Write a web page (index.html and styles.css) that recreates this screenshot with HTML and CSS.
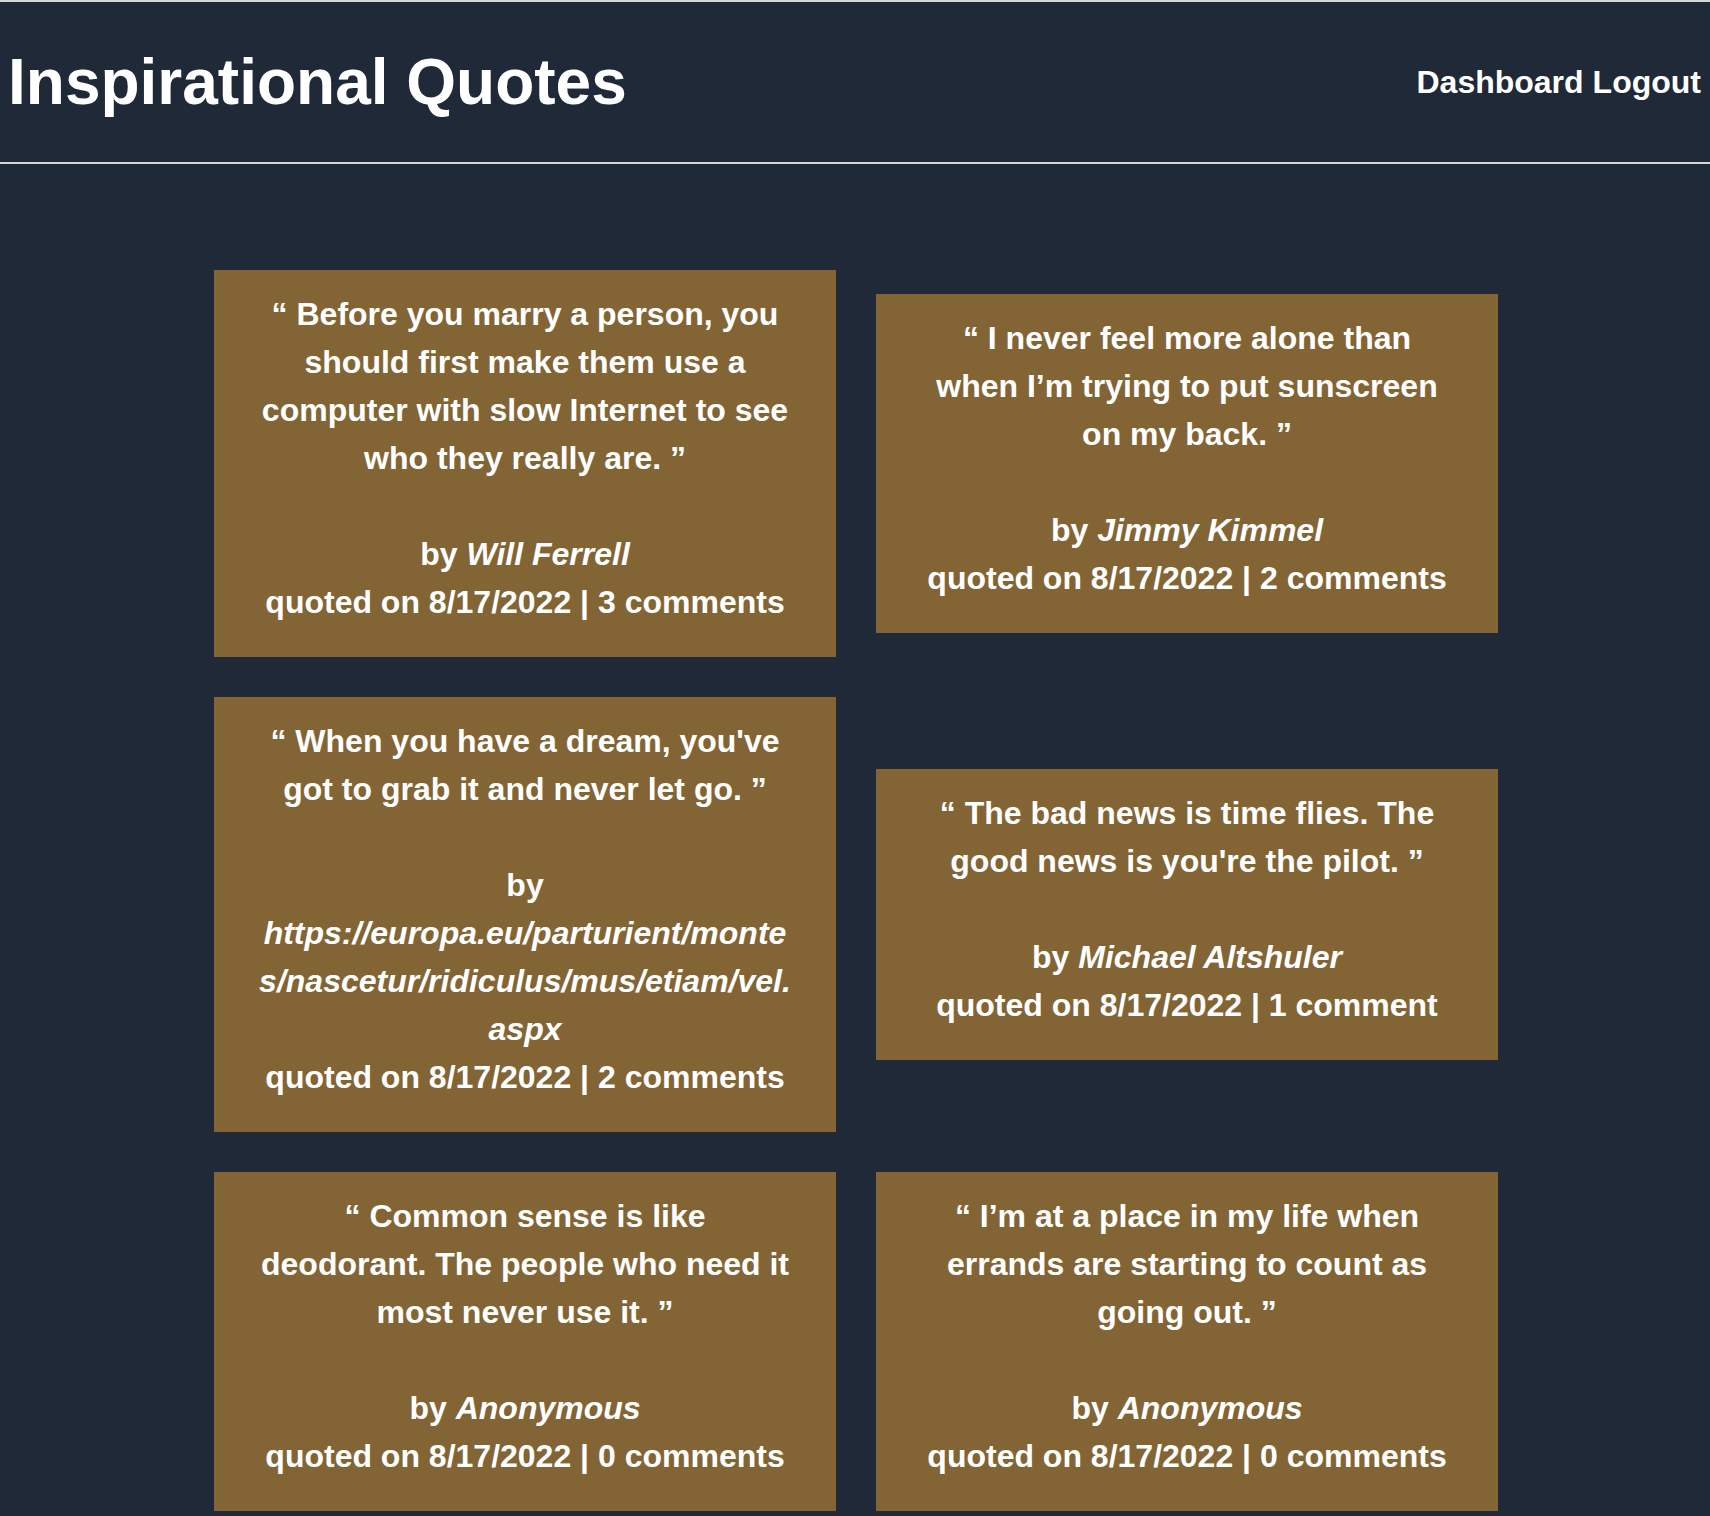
FILE: index.html
```html
<!DOCTYPE html>
<html lang="en">
<head>
<meta charset="utf-8">
<title>Inspirational Quotes</title>
<link rel="stylesheet" href="styles.css">
</head>
<body>
<header class="site-header">
  <h1 class="brand">Inspirational Quotes</h1>
  <nav class="nav">
    <a class="nav-link" href="#">Dashboard</a>
    <a class="nav-link" href="#">Logout</a>
  </nav>
</header>
<main class="quotes">
  <article class="card">
    <p class="quote">“ Before you marry a person, you should first make them use a computer with slow Internet to see who they really are. ”</p>
    <p class="author">by <em>Will Ferrell</em></p>
    <p class="meta">quoted on 8/17/2022 | 3 comments</p>
  </article>
  <article class="card">
    <p class="quote">“ I never feel more alone than when I’m trying to put sunscreen on my back. ”</p>
    <p class="author">by <em>Jimmy Kimmel</em></p>
    <p class="meta">quoted on 8/17/2022 | 2 comments</p>
  </article>
  <article class="card">
    <p class="quote">“ When you have a dream, you've got to grab it and never let go. ”</p>
    <p class="author">by <em>https://europa.eu/parturient/montes/nascetur/ridiculus/mus/etiam/vel.aspx</em></p>
    <p class="meta">quoted on 8/17/2022 | 2 comments</p>
  </article>
  <article class="card">
    <p class="quote">“ The bad news is time flies. The good news is you're the pilot. ”</p>
    <p class="author">by <em>Michael Altshuler</em></p>
    <p class="meta">quoted on 8/17/2022 | 1 comment</p>
  </article>
  <article class="card">
    <p class="quote">“ Common sense is like deodorant. The people who need it most never use it. ”</p>
    <p class="author">by <em>Anonymous</em></p>
    <p class="meta">quoted on 8/17/2022 | 0 comments</p>
  </article>
  <article class="card">
    <p class="quote">“ I’m at a place in my life when errands are starting to count as going out. ”</p>
    <p class="author">by <em>Anonymous</em></p>
    <p class="meta">quoted on 8/17/2022 | 0 comments</p>
  </article>
</main>
</body>
</html>
```

FILE: styles.css
```css
html, body {
  margin: 0;
  padding: 0;
}

body {
  background: #1f2937;
  color: #ffffff;
  font-family: "Liberation Sans", Arial, Helvetica, sans-serif;
  font-weight: 700;
}

.site-header {
  display: flex;
  justify-content: space-between;
  align-items: center;
  height: 160px;
  padding: 0 9px 0 8px;
  border-top: 2px solid #d6d6d6;
  border-bottom: 2px solid #d6d6d6;
}

.brand {
  margin: 0;
  font-size: 64px;
  font-weight: 700;
}

.nav {
  display: flex;
  gap: 9px;
  font-size: 32px;
}

.nav-link {
  color: #ffffff;
  text-decoration: none;
}

.quotes {
  width: 1284px;
  margin: 106px 212px 40px 214px;
  display: grid;
  grid-template-columns: repeat(2, minmax(0, 1fr));
  gap: 40px;
  align-items: center;
}

.card {
  min-width: 0;
  background: #836535;
  padding: 20px 44px 31px;
  text-align: center;
  font-size: 32px;
  line-height: 48px;
  overflow-wrap: break-word;
}

.card p {
  margin: 0;
}

.card .quote {
  margin-bottom: 48px;
}

.author em {
  font-style: italic;
}
```
